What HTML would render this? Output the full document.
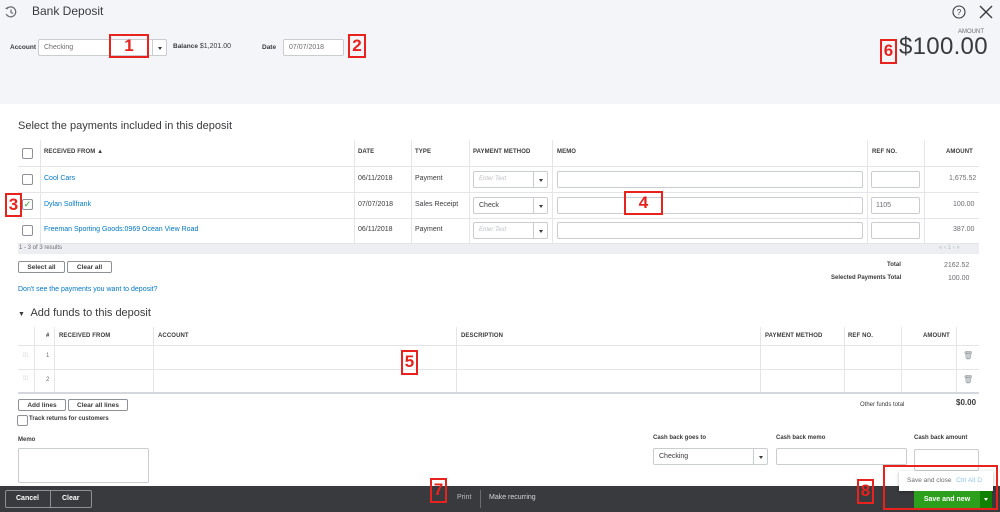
<!DOCTYPE html>
<html><head><meta charset="utf-8">
<style>
*{box-sizing:border-box;margin:0;padding:0}
body{width:1000px;height:512px;overflow:hidden;background:#fff;font-family:"Liberation Sans",sans-serif;color:#393a3d;position:relative;font-size:7px}
.a{position:absolute}
.hdr{left:0;top:0;width:1000px;height:104px;background:#f4f5f8}
.inp{position:absolute;background:#fff;border:1px solid #c9ccd1;border-radius:2px}
.lbl{position:absolute;font-size:6.5px;font-weight:bold;color:#393a3d}
.red{position:absolute;border:2px solid #e8221c;color:#e8221c;font-weight:bold;font-size:17px;text-align:center;line-height:19px}
.th{position:absolute;font-size:6px;font-weight:bold;letter-spacing:.1px;color:#393a3d;line-height:1.5}
.hl{position:absolute;height:1px;background:#e3e5e8}
.vl{position:absolute;width:1px;background:#e3e5e8}
.cb{position:absolute;width:11px;height:11px;border:1px solid #8d9096;border-radius:2px;background:#fff}
.lnk{position:absolute;color:#0077c5;font-size:7px;line-height:1.5}
.t{position:absolute;font-size:7px;color:#393a3d;line-height:1.5}
.btn{position:absolute;border:1px solid #8d9096;border-radius:2px;background:#fff;font-size:6.5px;font-weight:bold;text-align:center;line-height:11px}
.dd{position:absolute;width:14px;border-left:1px solid #c9ccd1;top:0;bottom:0;right:0}
.dd:after{content:"";position:absolute;left:5px;top:50%;margin-top:-1px;border:2px solid transparent;border-top:3px solid #393a3d;border-bottom:0}
.ph{position:absolute;color:#babec5;font-style:italic;font-size:6px}
</style></head><body>
<div class="a hdr"></div>
<svg class="a" style="left:4px;top:5px" width="14" height="14" viewBox="0 0 14 14" fill="none" stroke="#6b6c72" stroke-width="1.2"><path d="M3 3.5A5 5 0 1 1 2.2 9"/><path d="M1.5 3l1.5 0.8 0.8-1.7"/><path d="M7 4.5v3l2 1"/></svg>
<div class="t" style="left:32px;top:2px;font-size:12px">Bank Deposit</div>
<svg class="a" style="left:952px;top:5px" width="14" height="14" viewBox="0 0 14 14" fill="none" stroke="#393a3d" stroke-width="1.1"><circle cx="7" cy="7" r="6"/><text x="7" y="10" font-size="8" text-anchor="middle" fill="#393a3d" stroke="none" font-family="Liberation Sans">?</text></svg>
<svg class="a" style="left:979px;top:5px" width="14" height="14" viewBox="0 0 14 14" stroke="#393a3d" stroke-width="1.4"><path d="M1 1L13 13M13 1L1 13"/></svg>
<div class="lbl" style="left:10px;top:44px">Account</div>
<div class="inp" style="left:38px;top:39px;width:129px;height:17px"><div class="t" style="left:5px;top:3px;color:#6b6c72">Checking</div><div class="dd"></div></div>
<div class="t" style="left:173px;top:42px"><b style="font-size:6.5px">Balance</b> $1,201.00</div>
<div class="lbl" style="left:262px;top:44px">Date</div>
<div class="inp" style="left:283px;top:39px;width:61px;height:17px"><div class="t" style="left:5px;top:3px;color:#6b6c72">07/07/2018</div></div>
<div class="t" style="left:958px;top:28px;font-size:6px;color:#6b6c72">AMOUNT</div>
<div class="t" style="left:899px;top:33px;font-size:24px;letter-spacing:.3px;line-height:1.2">$100.00</div>

<div class="t" style="left:18px;top:118px;font-size:11px">Select the payments included in this deposit</div>
<div class="hl" style="left:18px;top:166px;width:961px"></div>
<div class="hl" style="left:18px;top:192px;width:961px"></div>
<div class="hl" style="left:18px;top:218px;width:961px"></div>
<div class="hl" style="left:18px;top:243px;width:961px;height:2px"></div>
<div class="a" style="left:18px;top:244px;width:961px;height:10px;background:#eceef1"></div>
<div class="vl" style="left:40px;top:140px;height:103px"></div>
<div class="vl" style="left:354px;top:140px;height:103px"></div>
<div class="vl" style="left:411px;top:140px;height:103px"></div>
<div class="vl" style="left:469px;top:140px;height:103px"></div>
<div class="vl" style="left:552px;top:140px;height:103px"></div>
<div class="vl" style="left:867px;top:140px;height:103px"></div>
<div class="vl" style="left:924px;top:140px;height:103px"></div>
<div class="cb" style="left:22px;top:148px"></div>
<div class="th" style="left:44px;top:148px">RECEIVED FROM ▲</div>
<div class="th" style="left:358px;top:148px">DATE</div>
<div class="th" style="left:415px;top:148px">TYPE</div>
<div class="th" style="left:473px;top:148px">PAYMENT METHOD</div>
<div class="th" style="left:557px;top:148px">MEMO</div>
<div class="th" style="left:872px;top:148px">REF NO.</div>
<div class="th" style="left:946px;top:148px">AMOUNT</div>

<div class="cb" style="left:22px;top:174px"></div>
<div class="lnk" style="left:44px;top:174px">Cool Cars</div>
<div class="t" style="left:358px;top:174px">06/11/2018</div>
<div class="t" style="left:415px;top:174px">Payment</div>
<div class="inp" style="left:473px;top:171px;width:75px;height:17px"><div class="ph" style="left:5px;top:4px">Enter Text</div><div class="dd"></div></div>
<div class="inp" style="left:557px;top:171px;width:306px;height:17px"></div>
<div class="inp" style="left:871px;top:171px;width:49px;height:17px"></div>
<div class="t" style="left:949px;top:174px;color:#6b6c72">1,675.52</div>

<div class="cb" style="left:22px;top:199px;color:#2ca01c;font-size:9px;line-height:9px;text-align:center">✓</div>
<div class="lnk" style="left:44px;top:200px">Dylan Sollfrank</div>
<div class="t" style="left:358px;top:200px">07/07/2018</div>
<div class="t" style="left:415px;top:200px">Sales Receipt</div>
<div class="inp" style="left:473px;top:197px;width:75px;height:17px"><div class="t" style="left:5px;top:3px">Check</div><div class="dd"></div></div>
<div class="inp" style="left:557px;top:197px;width:306px;height:17px"></div>
<div class="inp" style="left:871px;top:197px;width:49px;height:17px"><div class="t" style="left:4px;top:3px;color:#6b6c72">1105</div></div>
<div class="t" style="left:953px;top:200px;color:#6b6c72">100.00</div>

<div class="cb" style="left:22px;top:225px"></div>
<div class="lnk" style="left:44px;top:225px">Freeman Sporting Goods:0969 Ocean View Road</div>
<div class="t" style="left:358px;top:225px">06/11/2018</div>
<div class="t" style="left:415px;top:225px">Payment</div>
<div class="inp" style="left:473px;top:222px;width:75px;height:17px"><div class="ph" style="left:5px;top:4px">Enter Text</div><div class="dd"></div></div>
<div class="inp" style="left:557px;top:222px;width:306px;height:17px"></div>
<div class="inp" style="left:871px;top:222px;width:49px;height:17px"></div>
<div class="t" style="left:953px;top:225px;color:#6b6c72">387.00</div>

<div class="t" style="left:19px;top:244px;font-size:6px;color:#6b6c72">1 - 3 of 3 results</div>
<div class="t" style="left:939px;top:244px;font-size:6px;color:#babec5">«  ‹  1  ›  »</div>
<div class="btn" style="left:18px;top:261px;width:47px;height:12px">Select all</div>
<div class="btn" style="left:67px;top:261px;width:45px;height:12px">Clear all</div>
<div class="t" style="left:887px;top:261px;font-size:6px;font-weight:bold">Total</div>
<div class="t" style="left:944px;top:261px;color:#6b6c72">2162.52</div>
<div class="t" style="left:831px;top:274px;font-size:6px;font-weight:bold">Selected Payments Total</div>
<div class="t" style="left:948px;top:274px;color:#6b6c72">100.00</div>
<div class="lnk" style="left:18px;top:285px">Don't see the payments you want to deposit?</div>

<div class="t" style="left:18px;top:305px;font-size:11px"><span style="font-size:7px">▼</span>&nbsp; Add funds to this deposit</div>
<div class="hl" style="left:18px;top:345px;width:961px"></div>
<div class="hl" style="left:18px;top:369px;width:961px"></div>
<div class="hl" style="left:18px;top:392px;width:961px;height:2px;background:#d4d7dc"></div>
<div class="vl" style="left:34px;top:327px;height:65px"></div>
<div class="vl" style="left:54px;top:327px;height:65px"></div>
<div class="vl" style="left:153px;top:327px;height:65px"></div>
<div class="vl" style="left:456px;top:327px;height:65px"></div>
<div class="vl" style="left:760px;top:327px;height:65px"></div>
<div class="vl" style="left:844px;top:327px;height:65px"></div>
<div class="vl" style="left:901px;top:327px;height:65px"></div>
<div class="vl" style="left:956px;top:327px;height:65px"></div>
<div class="th" style="left:46px;top:332px">#</div>
<div class="th" style="left:59px;top:332px">RECEIVED FROM</div>
<div class="th" style="left:158px;top:332px">ACCOUNT</div>
<div class="th" style="left:461px;top:332px">DESCRIPTION</div>
<div class="th" style="left:765px;top:332px">PAYMENT METHOD</div>
<div class="th" style="left:848px;top:332px">REF NO.</div>
<div class="th" style="left:923px;top:332px">AMOUNT</div>
<div class="t" style="left:23px;top:352px;color:#babec5;font-size:6px">⁞⁞⁞</div>
<div class="t" style="left:46px;top:352px;font-size:6px;color:#6b6c72">1</div>
<div class="t" style="left:963px;top:350px;color:#8d9096;font-size:8px">🗑</div>
<div class="t" style="left:23px;top:375px;color:#babec5;font-size:6px">⁞⁞⁞</div>
<div class="t" style="left:46px;top:376px;font-size:6px;color:#6b6c72">2</div>
<div class="t" style="left:963px;top:374px;color:#8d9096;font-size:8px">🗑</div>
<div class="btn" style="left:18px;top:399px;width:48px;height:12px">Add lines</div>
<div class="btn" style="left:68px;top:399px;width:60px;height:12px">Clear all lines</div>
<div class="cb" style="left:17px;top:415px;width:11px;height:11px"></div>
<div class="t" style="left:29px;top:415px;font-size:6px;font-weight:bold">Track returns for customers</div>
<div class="t" style="left:860px;top:401px;font-size:6px">Other funds total</div>
<div class="t" style="left:956px;top:397px;font-size:8px;font-weight:bold">$0.00</div>
<div class="t" style="left:18px;top:436px;font-size:6px;font-weight:bold">Memo</div>
<div class="inp" style="left:18px;top:448px;width:131px;height:35px"></div>
<div class="t" style="left:653px;top:434px;font-size:6px;font-weight:bold">Cash back goes to</div>
<div class="inp" style="left:653px;top:448px;width:115px;height:17px"><div class="t" style="left:5px;top:3px">Checking</div><div class="dd"></div></div>
<div class="t" style="left:776px;top:434px;font-size:6px;font-weight:bold">Cash back memo</div>
<div class="inp" style="left:776px;top:448px;width:131px;height:17px"></div>
<div class="t" style="left:914px;top:434px;font-size:6px;font-weight:bold">Cash back amount</div>
<div class="inp" style="left:914px;top:449px;width:65px;height:22px"></div>

<div class="a" style="left:0;top:486px;width:1000px;height:26px;background:#393a3d"></div>
<div class="a" style="left:5px;top:490px;width:87px;height:18px;border:1px solid #8d9096;border-radius:2px"></div>
<div class="vl" style="left:50px;top:490px;height:18px;background:#8d9096"></div>
<div class="t" style="left:16px;top:494px;color:#fff;font-weight:bold">Cancel</div>
<div class="t" style="left:62px;top:494px;color:#fff;font-weight:bold">Clear</div>
<div class="t" style="left:457px;top:493px;color:#babec5">Print</div>
<div class="vl" style="left:480px;top:490px;height:18px;background:#6b6c72"></div>
<div class="t" style="left:489px;top:493px;color:#d4d7dc">Make recurring</div>
<div class="a" style="left:899px;top:471px;width:94px;height:20px;background:#fff;box-shadow:0 1px 3px rgba(0,0,0,.3)"></div>
<div class="t" style="left:907px;top:476px;font-size:6.5px;color:#6b6c72">Save and close <span style="color:#8ec5ef;margin-left:3px">Ctrl Alt D</span></div>
<div class="a" style="left:914px;top:491px;width:66px;height:17px;background:#2ca01c;color:#fff;font-weight:bold;font-size:7px;text-align:center;line-height:17px">Save and new</div>
<div class="a" style="left:980px;top:491px;width:12px;height:17px;background:#108000"></div>
<div class="a" style="left:984px;top:498px;border:2px solid transparent;border-top:3px solid #fff;border-bottom:0"></div>

<div class="red" style="left:109px;top:34px;width:40px;height:24px">1</div>
<div class="red" style="left:348px;top:34px;width:18px;height:24px">2</div>
<div class="red" style="left:5px;top:193px;width:17px;height:24px">3</div>
<div class="red" style="left:624px;top:191px;width:39px;height:24px">4</div>
<div class="red" style="left:401px;top:350px;width:17px;height:25px">5</div>
<div class="red" style="left:880px;top:39px;width:17px;height:25px">6</div>
<div class="red" style="left:430px;top:478px;width:17px;height:25px">7</div>
<div class="red" style="left:857px;top:479px;width:17px;height:25px">8</div>
<div class="a" style="left:883px;top:465px;width:115px;height:45px;border:2px solid #e8221c"></div>
</body></html>
